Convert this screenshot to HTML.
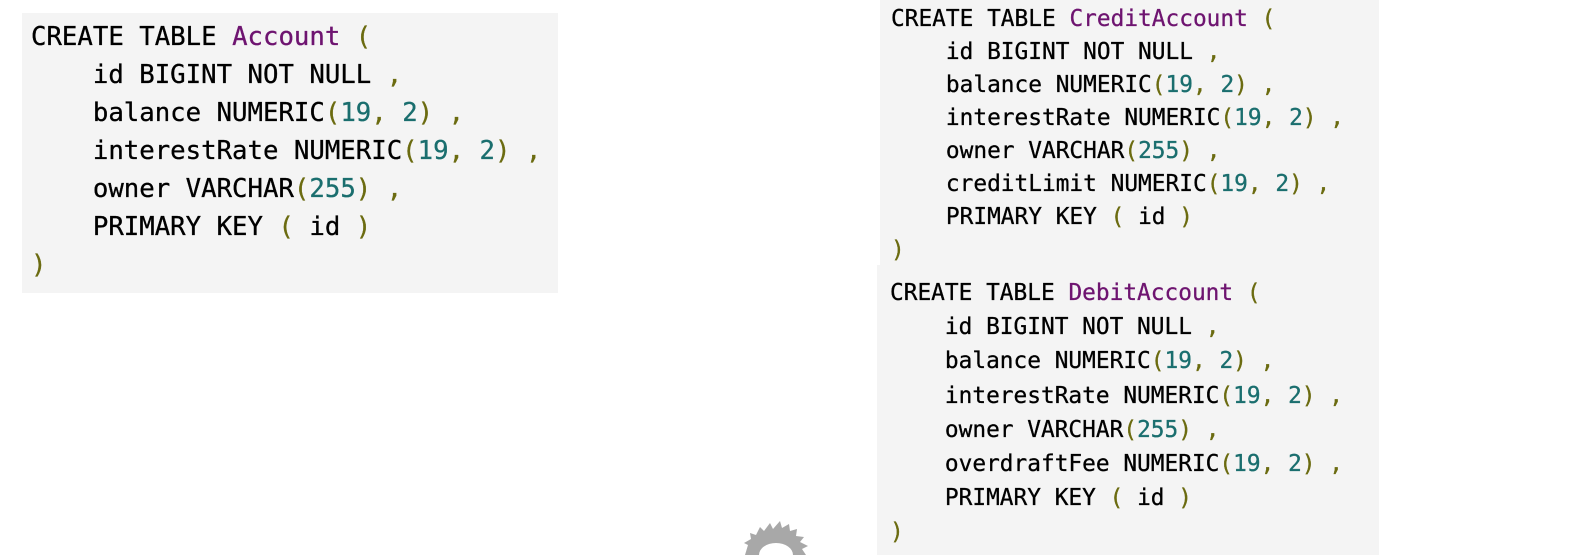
<!DOCTYPE html>
<html><head><style>
body{margin:0;width:1571px;height:555px;background:#fff;position:relative;overflow:hidden;font-family:"DejaVu Sans Mono","Liberation Mono",monospace;color:#000}
.b{position:absolute;background:#f4f4f4}
pre{margin:0;font-family:inherit;position:absolute;white-space:pre;-webkit-text-stroke:0.3px}
.n{color:#6e1470}.p{color:#6b6b10}.d{color:#1a6e6e}
</style></head><body>
<div class="b" style="left:22px;top:13px;width:536px;height:280px">
<pre style="left:9px;top:5px;font-size:25.7px;line-height:38px">CREATE TABLE <span class="n">Account</span> <span class="p">(</span>
    id BIGINT NOT NULL <span class="p">,</span>
    balance NUMERIC<span class="p">(</span><span class="d">19</span><span class="p">,</span> <span class="d">2</span><span class="p">)</span> <span class="p">,</span>
    interestRate NUMERIC<span class="p">(</span><span class="d">19</span><span class="p">,</span> <span class="d">2</span><span class="p">)</span> <span class="p">,</span>
    owner VARCHAR<span class="p">(</span><span class="d">255</span><span class="p">)</span> <span class="p">,</span>
    PRIMARY KEY <span class="p">(</span> id <span class="p">)</span>
<span class="p">)</span></pre></div>
<div class="b" style="left:880px;top:0;width:499px;height:265px">
<pre style="left:11px;top:3px;font-size:22.8px;line-height:33px">CREATE TABLE <span class="n">CreditAccount</span> <span class="p">(</span>
    id BIGINT NOT NULL <span class="p">,</span>
    balance NUMERIC<span class="p">(</span><span class="d">19</span><span class="p">,</span> <span class="d">2</span><span class="p">)</span> <span class="p">,</span>
    interestRate NUMERIC<span class="p">(</span><span class="d">19</span><span class="p">,</span> <span class="d">2</span><span class="p">)</span> <span class="p">,</span>
    owner VARCHAR<span class="p">(</span><span class="d">255</span><span class="p">)</span> <span class="p">,</span>
    creditLimit NUMERIC<span class="p">(</span><span class="d">19</span><span class="p">,</span> <span class="d">2</span><span class="p">)</span> <span class="p">,</span>
    PRIMARY KEY <span class="p">(</span> id <span class="p">)</span>
<span class="p">)</span></pre></div>
<div class="b" style="left:877px;top:265px;width:502px;height:290px">
<pre style="left:13px;top:11px;font-size:22.8px;line-height:34.2px">CREATE TABLE <span class="n">DebitAccount</span> <span class="p">(</span>
    id BIGINT NOT NULL <span class="p">,</span>
    balance NUMERIC<span class="p">(</span><span class="d">19</span><span class="p">,</span> <span class="d">2</span><span class="p">)</span> <span class="p">,</span>
    interestRate NUMERIC<span class="p">(</span><span class="d">19</span><span class="p">,</span> <span class="d">2</span><span class="p">)</span> <span class="p">,</span>
    owner VARCHAR<span class="p">(</span><span class="d">255</span><span class="p">)</span> <span class="p">,</span>
    overdraftFee NUMERIC<span class="p">(</span><span class="d">19</span><span class="p">,</span> <span class="d">2</span><span class="p">)</span> <span class="p">,</span>
    PRIMARY KEY <span class="p">(</span> id <span class="p">)</span>
<span class="p">)</span></pre></div>
<svg style="position:absolute;left:740px;top:515px" width="75" height="40" viewBox="0 0 75 40">
<path d="M5 40 L8 30 L4 28 L11 24 L10 18 L16 20 L20 12 L24 16 L30 8 L33 14 L40 6 L42 13 L49 9 L50 16 L57 14 L56 21 L64 22 L60 27 L68 31 L62 34 L66 40 Z" fill="#a8a8a8"/>
<ellipse cx="36" cy="40" rx="17" ry="12" fill="#fff"/>
</svg>
</body></html>
